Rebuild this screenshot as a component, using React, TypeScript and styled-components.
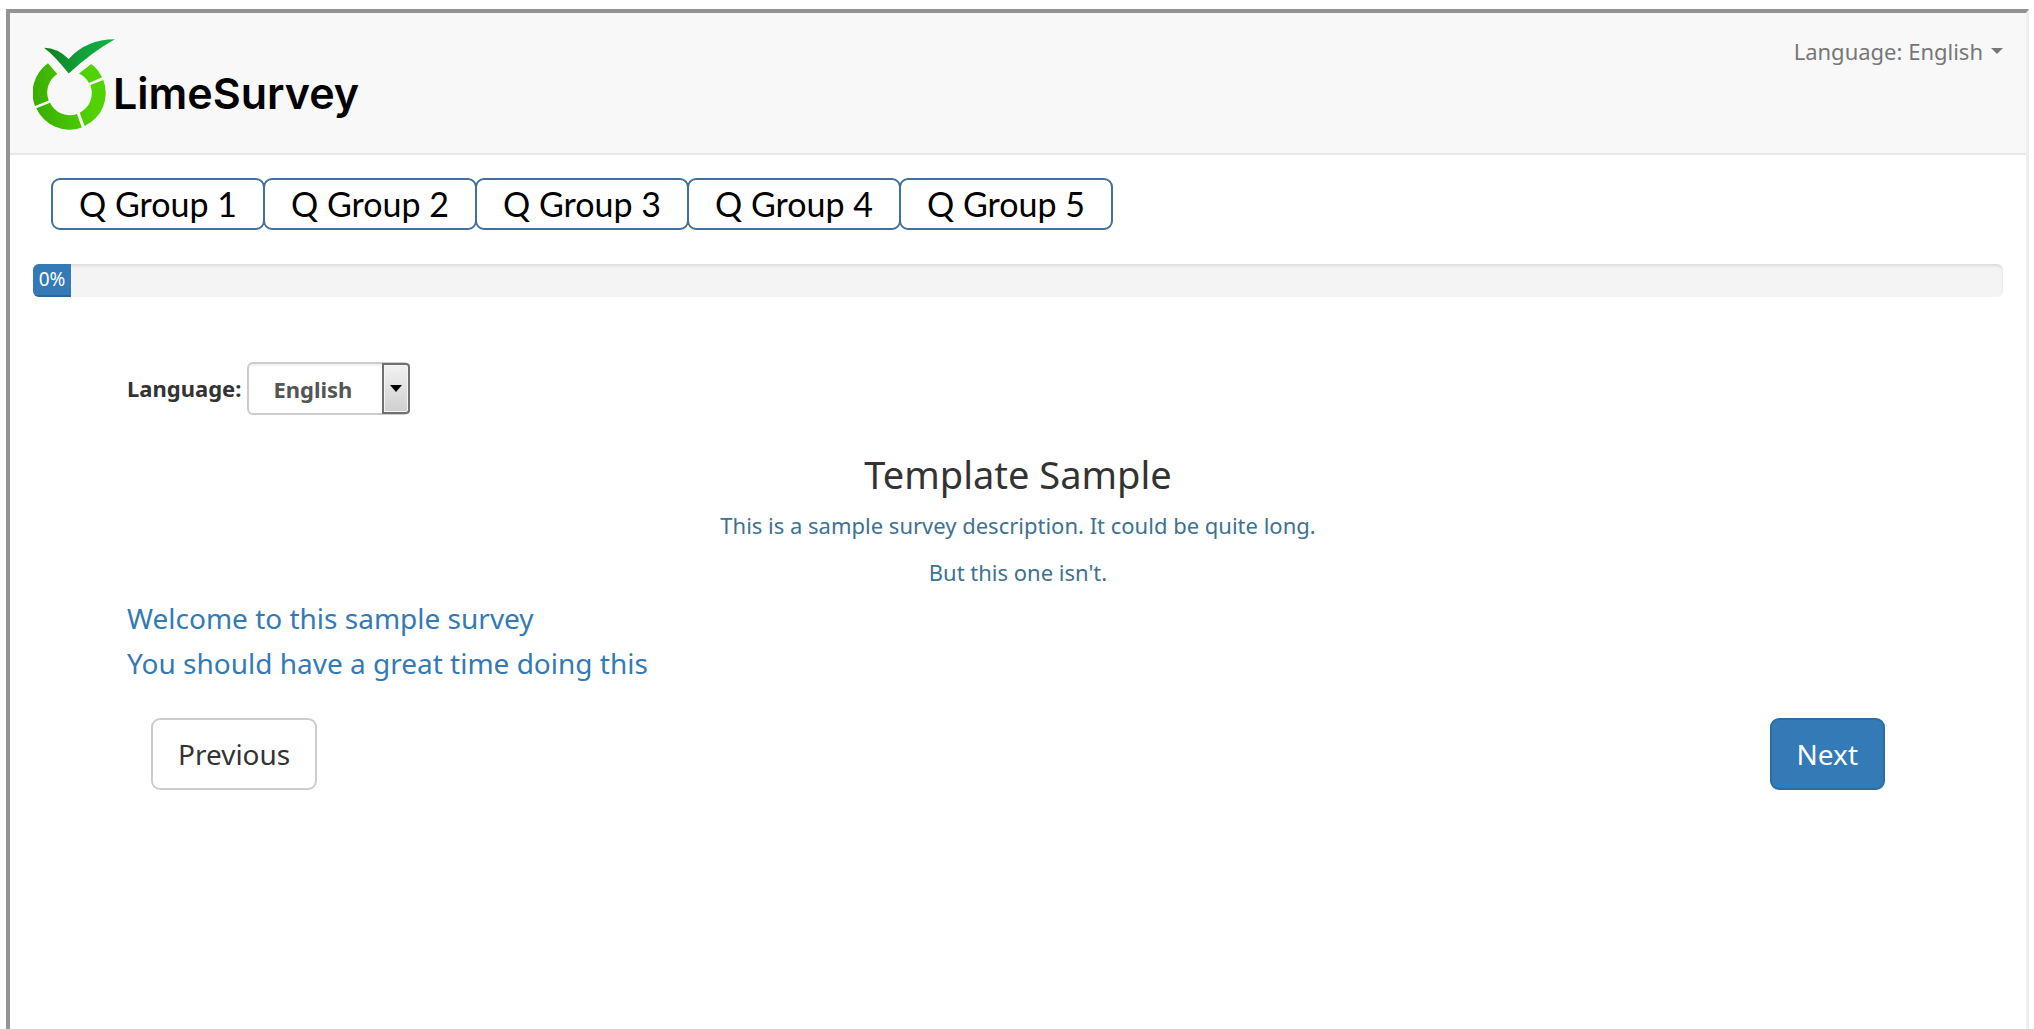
import React from "react";
import styled, { createGlobalStyle } from "styled-components";

const GlobalStyle = createGlobalStyle`
  *, *::before, *::after { box-sizing: border-box; }
  body {
    margin: 0;
    background: #fff;
    color: #333;
    font-family: "Noto Sans", "Open Sans", sans-serif;
    font-size: 22px;
    line-height: 32px;
  }
  button, select { font: inherit; }
`;

const Frame = styled.div`
  min-height: calc(100vh - 9px);
  margin: 9px 5px 0 6px;
  border: solid;
  border-width: 4px 3px 0 4px;
  border-color: #939393 #eee #fff #939393;
`;

const Header = styled.header`
  display: flex;
  justify-content: space-between;
  align-items: flex-start;
  padding: 22px 23px 21px;
  background: #f8f8f8;
  border-bottom: 2px solid #e7e7e7;
`;

const Brand = styled.a`
  display: flex;
  color: #000;
  text-decoration: none;
`;

const LogoMark = styled.svg`
  width: 84px;
  height: 97px;
`;

const BrandName = styled.span`
  padding-top: 32px;
  font-family: Inter, Roboto, sans-serif;
  font-size: 43px;
  font-weight: 600;
  line-height: 52px;
  margin-left: -4px;
`;

const LanguageMenu = styled.button`
  display: flex;
  align-items: center;
  gap: 8px;
  padding: 0;
  border: 0;
  background: none;
  color: #777;
`;

const Caret = styled.span`
  border: solid transparent;
  border-width: 6px 6px 0;
  border-top-color: #777;
`;

const Groups = styled.nav`
  display: flex;
  padding: 23px 41px 34px;
`;

const GroupTab = styled.button`
  width: 214px;
  height: 52px;
  margin-right: -2px;
  padding: 0;
  border: 2px solid #41719c;
  border-radius: 9px;
  background: #fff;
  color: #000;
  font-family: Lato, "Noto Sans", sans-serif;
  font-size: 34px;
  line-height: 48px;
`;

const Track = styled.div`
  height: 33px;
  margin: 0 23px;
  overflow: hidden;
  border-radius: 6px;
  background: #f4f4f4;
  box-shadow: inset 0 2px 3px rgba(0, 0, 0, 0.1);
`;

const Bar = styled.div`
  width: max-content;
  min-width: 38px;
  height: 33px;
  background: #337ab7;
  box-shadow: inset 0 -2px 0 rgba(0, 0, 0, 0.15);
  color: #fff;
  font-size: 19px;
  line-height: 31px;
  text-align: center;
`;

const Main = styled.main`
  padding: 65px 117px;
`;

const LanguageForm = styled.form`
  display: flex;
  align-items: center;
  gap: 6px;
  font-weight: 700;
`;

const Label = styled.label`
  padding-bottom: 2px;
`;

const SelectBox = styled.div`
  position: relative;
  width: 163px;
`;

const Select = styled.select`
  width: 100%;
  height: 53px;
  padding: 0 24px;
  appearance: none;
  border: 2px solid #ccc;
  border-radius: 6px;
  background: #fff;
  box-shadow: inset 0 2px 2px rgba(0, 0, 0, 0.06);
  color: #555;
`;

const SelectArrow = styled.span`
  position: absolute;
  top: 1px;
  right: 0;
  bottom: 1px;
  display: grid;
  place-items: center;
  width: 28px;
  border: 2px solid #707070;
  border-radius: 0 4px 4px 0;
  background: linear-gradient(#f2f2f2, #cfcfcf);
  box-shadow: inset 0 0 0 1px #f5f5f5;
  pointer-events: none;

  &::after {
    content: "";
    border: solid transparent;
    border-width: 7px 6px 0;
    border-top-color: #000;
  }
`;

const Title = styled.h1`
  margin: 35px 0 11px;
  font-size: 38px;
  font-weight: 400;
  line-height: 48px;
  text-align: center;
`;

const Description = styled.div`
  display: grid;
  gap: 15px;
  margin-bottom: 8px;
  color: #3d7292;
  text-align: center;

  p { margin: 0; }
`;

const Welcome = styled.p`
  margin: 0;
  color: #337ab7;
  font-size: 28px;
  line-height: 45px;
`;

const Actions = styled.div`
  display: flex;
  justify-content: space-between;
  padding: 32px 24px;
`;

const ActionButton = styled.button<{ $primary?: boolean }>`
  height: 72px;
  padding: 0 25px;
  border: 2px solid ${(p) => (p.$primary ? "#2e6da4" : "#ccc")};
  border-radius: 9px;
  background: ${(p) => (p.$primary ? "#337ab7" : "#fff")};
  color: ${(p) => (p.$primary ? "#fff" : "#333")};
  font-size: 28px;
`;

const groups = [1, 2, 3, 4, 5];

export default function App() {
  return (
    <>
      <GlobalStyle />
      <Frame>
        <Header>
          <Brand href="#" aria-label="LimeSurvey">
            <LogoMark viewBox="0 0 84 97" aria-hidden="true">
              <defs>
                <linearGradient id="ring" gradientUnits="userSpaceOnUse" x1="0" x2="72" y1="60" y2="50">
                  <stop offset="0" stopColor="#3aad00" />
                  <stop offset="0.8" stopColor="#50d300" />
                </linearGradient>
                <linearGradient id="tick" x1="0" x2="1" y1="0" y2="0">
                  <stop offset="0" stopColor="#0d7d1c" />
                  <stop offset="0.5" stopColor="#10a037" />
                  <stop offset="1" stopColor="#12b346" />
                </linearGradient>
              </defs>
              <path
                fill="url(#ring)"
                d="M15 28.300 L24.300 39 A22 22 0 0 0 15.700 65.500 L2 71 A36.300 36.300 0 0 1 15 28.300Z
                   M3.300 73.300 L17 67.700 A22 22 0 0 0 44 79 L48.800 92.500 A36.300 36.300 0 0 1 3.300 73.300Z
                   M46.700 77.700 A22 22 0 0 0 57.300 50 L70.300 45 A36.300 36.300 0 0 1 51.700 91Z
                   M46 38.500 L58.300 29 A36.300 36.300 0 0 1 69 42.300 L56 48 A22 22 0 0 0 46 38.500Z"
              />
              <path
                fill="url(#tick)"
                d="M11 12.700 Q25 13 35.700 24 Q53 4.500 82 4.300 Q59 17 35.700 38.500 Q21 20 11 12.700Z"
              />
            </LogoMark>
            <BrandName>LimeSurvey</BrandName>
          </Brand>
          <LanguageMenu type="button">
            Language: English
            <Caret />
          </LanguageMenu>
        </Header>

        <Groups aria-label="Question groups">
          {groups.map((n) => (
            <GroupTab key={n} type="button">
              Q Group {n}
            </GroupTab>
          ))}
        </Groups>

        <Track role="progressbar" aria-valuenow={0} aria-valuemin={0} aria-valuemax={100}>
          <Bar>0%</Bar>
        </Track>

        <Main>
          <LanguageForm>
            <Label htmlFor="lang">Language:</Label>
            <SelectBox>
              <Select id="lang" defaultValue="en">
                <option value="en">English</option>
              </Select>
              <SelectArrow />
            </SelectBox>
          </LanguageForm>

          <Title>Template Sample</Title>
          <Description>
            <p>This is a sample survey description. It could be quite long.</p>
            <p>But this one isn't.</p>
          </Description>
          <Welcome>Welcome to this sample survey</Welcome>
          <Welcome>You should have a great time doing this</Welcome>

          <Actions>
            <ActionButton type="button">Previous</ActionButton>
            <ActionButton type="button" $primary>
              Next
            </ActionButton>
          </Actions>
        </Main>
      </Frame>
    </>
  );
}
